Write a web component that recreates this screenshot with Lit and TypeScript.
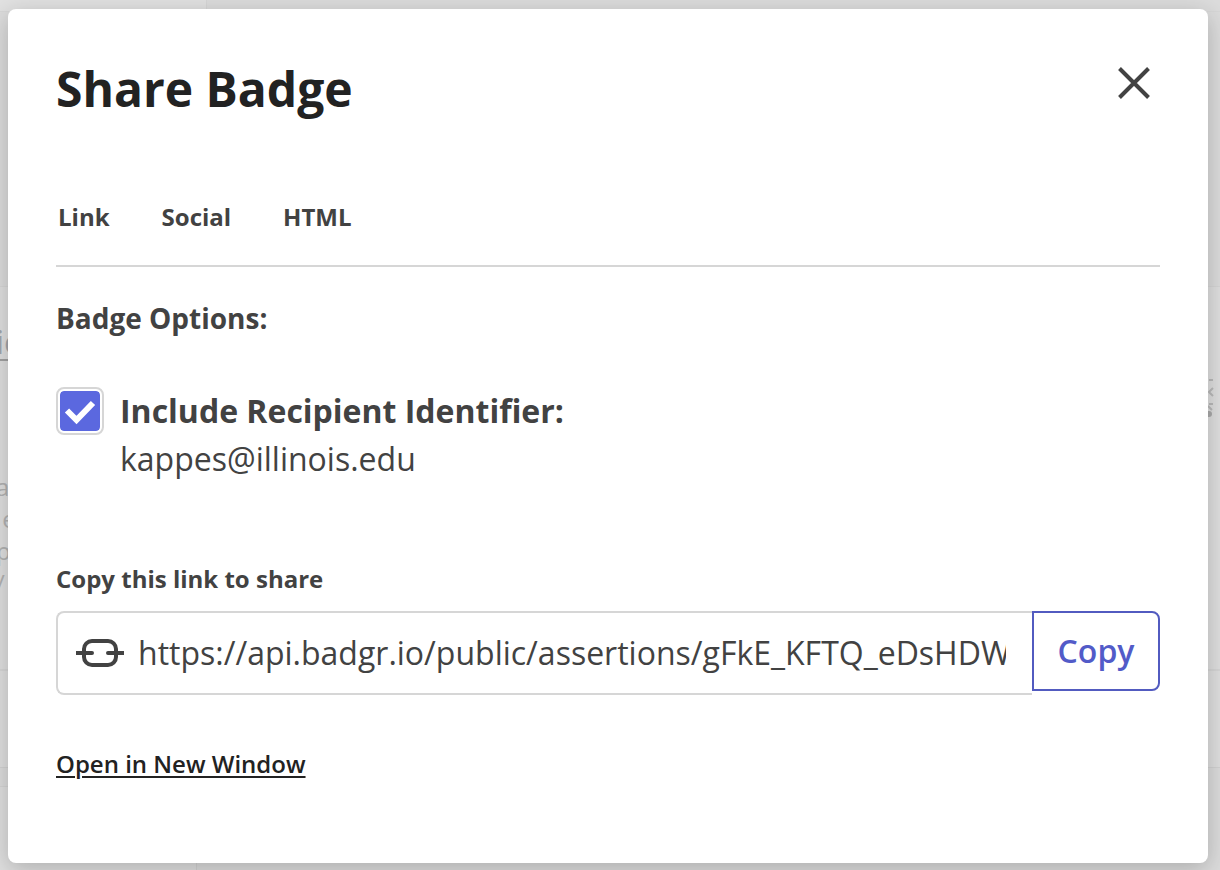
import { LitElement, html, css } from "lit";
import { customElement, property, state } from "lit/decorators.js";

@customElement("page-backdrop")
class PageBackdrop extends LitElement {
  static styles = css`
    :host {
      display: grid;
      grid-template-rows: 11px 275px 482px 18px 1fr;
      background: #dcdcdc;
      color: #b2b2b2;
      font-size: 24px;
      line-height: 32px;
      overflow: hidden;
    }
    .top {
      width: 206px;
      background: #e1e1e1;
      border-right: 1px solid #d6d6d6;
    }
    .strip {
      border-top: 1px solid #d7d7d7;
    }
    .card {
      display: grid;
      grid-template-rows: 384px 1fr;
      background: #dfdfdf;
      border-top: 1px solid #d6d6d6;
      border-bottom: 1px solid #d2d2d2;
      box-sizing: border-box;
    }
    .content {
      display: flex;
      justify-content: space-between;
      border-bottom: 2px solid #d6d6d6;
    }
    .excerpt {
      width: 24px;
    }
    .title {
      margin-top: 38px;
      margin-left: -4px;
      font-size: 32px;
      line-height: 34px;
      border-bottom: 2px solid #a2a2a2;
      color: #a2a6ac;
    }
    .lines {
      margin-top: 110px;
      margin-left: -4px;
    }
    .more {
      width: 8px;
      height: 42px;
      margin: 90px 4px 0 0;
    }
    .foot {
      width: 196px;
      background: #dfdfdf;
      border-top: 1px solid #d4d4d4;
      border-right: 1px solid #d2d2d2;
    }
  `;

  render() {
    return html`
      <div class="top"></div>
      <div class="strip"></div>
      <div class="card">
        <div class="content">
          <div class="excerpt">
            <div class="title">ic</div>
            <div class="lines">a<br />&nbsp;e<br />p<br />/</div>
          </div>
          <svg class="more" viewBox="0 0 8 42" fill="none" stroke="#bababa" stroke-width="2">
            <path d="M1 3H5M5 11L1 15L5 19M1 27H5" />
            <path d="M0 29L4 33" />
            <circle cx="1" cy="37" r="3" fill="#aaa" stroke="none" />
          </svg>
        </div>
      </div>
      <div></div>
      <div class="foot"></div>
    `;
  }
}

@customElement("copy-field")
class CopyField extends LitElement {
  @property() label = "";
  @property() value = "";

  static styles = css`
    :host {
      display: block;
    }
    label {
      display: block;
      font-size: 24px;
      font-weight: 700;
      line-height: 32px;
      margin-bottom: 16px;
    }
    .row {
      display: flex;
      align-items: flex-start;
    }
    .box {
      flex: 1;
      min-width: 0;
      height: 84px;
      box-sizing: border-box;
      display: flex;
      align-items: center;
      gap: 14px;
      padding: 0 26px 0 18px;
      border: 2px solid #d6d6d6;
      border-right: 0;
      border-radius: 8px 0 0 8px;
    }
    svg {
      flex: none;
    }
    input {
      flex: 1;
      min-width: 0;
      height: 48px;
      padding: 0 0 2px;
      box-sizing: border-box;
      border: 0;
      outline: 0;
      background: none;
      color: inherit;
      font: inherit;
      font-size: 32px;
    }
    button {
      width: 128px;
      height: 80px;
      padding: 0 0 2px;
      border: 2px solid #525bc0;
      border-radius: 0 8px 8px 0;
      background: #fff;
      color: #525bc8;
      font: inherit;
      font-size: 32px;
      font-weight: 600;
    }
  `;

  private copy() {
    navigator.clipboard?.writeText(this.value);
  }

  render() {
    return html`
      <label for="url">${this.label}</label>
      <div class="row">
        <div class="box">
          <svg width="48" height="48" viewBox="0 0 48 48" fill="none" stroke="#424242" stroke-width="4" aria-hidden="true">
            <rect x="8" y="12" width="32" height="24" rx="8" />
            <path d="M0 24H16M32 24H48" />
            <path d="M10 24H16M32 24H38" stroke-linecap="round" />
          </svg>
          <input id="url" type="text" readonly .value=${this.value} />
        </div>
        <button type="button" @click=${this.copy}>Copy</button>
      </div>
    `;
  }
}

@customElement("app-root")
class AppRoot extends LitElement {
  @state() private includeRecipient = true;

  private tabs = ["Link", "Social", "HTML"];

  static styles = css`
    :host {
      display: grid;
      min-height: 100vh;
      font-family: "Open Sans", "Noto Sans", sans-serif;
      color: #424242;
    }
    page-backdrop,
    main {
      grid-area: 1 / 1;
      min-width: 0;
    }
    main {
      position: relative;
      margin: 9px 12px 7px 8px;
      padding: 48px;
      box-sizing: border-box;
      border-radius: 8px;
      background: #fff;
      box-shadow: 0 6px 24px rgba(0, 0, 0, 0.22);
    }
    header {
      display: flex;
      justify-content: space-between;
      align-items: flex-start;
    }
    h1 {
      margin: 0;
      font-size: 48px;
      line-height: 64px;
      font-weight: 700;
      color: #222;
    }
    .close {
      width: 52px;
      height: 52px;
      padding: 0;
      border: 0;
      background: none;
    }
    .close svg {
      display: block;
    }
    nav {
      display: flex;
      gap: 48px;
      margin-top: 48px;
      padding: 32px 0;
      border-bottom: 2px solid #d6d6d6;
    }
    .tab {
      padding: 0 2px;
      border: 0;
      background: none;
      color: inherit;
      font: inherit;
      font-size: 24px;
      font-weight: 700;
      line-height: 32px;
    }
    h2 {
      margin: 32px 0 50px;
      font-size: 28px;
      line-height: 38px;
      font-weight: 700;
    }
    .option {
      display: grid;
      grid-template-columns: 48px 1fr;
      column-gap: 16px;
      line-height: 48px;
      font-size: 32px;
    }
    .option label {
      font-weight: 700;
    }
    .option span {
      grid-column: 2;
    }
    input {
      appearance: none;
      width: 48px;
      height: 48px;
      margin: 0;
      border: 2px solid #d6d6d6;
      border-radius: 8px;
      padding: 2px;
    }
    input:checked {
      background: #5b68df
        url("data:image/svg+xml,%3Csvg xmlns='http://www.w3.org/2000/svg' viewBox='0 0 40 40'%3E%3Cpath d='M7 19.5L16.5 29L33 12' fill='none' stroke='white' stroke-width='6'/%3E%3C/svg%3E")
        center / 40px 40px no-repeat content-box;
      box-shadow: inset 0 0 0 2px #fff;
    }
    copy-field {
      margin-top: 80px;
    }
    .open {
      display: inline-block;
      margin-top: 53px;
      font-size: 24px;
      line-height: 32px;
      font-weight: 600;
      color: #222;
      text-underline-offset: 3px;
      text-decoration-thickness: 2px;
    }
  `;

  render() {
    return html`
      <page-backdrop aria-hidden="true"></page-backdrop>
      <main role="dialog" aria-labelledby="heading">
        <header>
          <h1 id="heading">Share Badge</h1>
          <button class="close" type="button" aria-label="Close">
            <svg width="52" height="52" viewBox="0 0 52 52" fill="none" stroke="#424242" stroke-width="4">
              <path d="M11.5 11.5L40.5 40.5M40.5 11.5L11.5 40.5" />
            </svg>
          </button>
        </header>
        <nav>${this.tabs.map((t) => html`<button class="tab" type="button">${t}</button>`)}</nav>
        <h2>Badge Options:</h2>
        <div class="option">
          <input
            id="recipient"
            type="checkbox"
            .checked=${this.includeRecipient}
            @change=${(e: Event) => (this.includeRecipient = (e.target as HTMLInputElement).checked)}
          />
          <label for="recipient">Include Recipient Identifier:</label>
          <span>kappes@illinois.edu</span>
        </div>
        <copy-field
          label="Copy this link to share"
          value="https://api.badgr.io/public/assertions/gFkE_KFTQ_eDsHDWQXGUuw"
        ></copy-field>
        <a class="open" href="#">Open in New Window</a>
      </main>
    `;
  }
}
